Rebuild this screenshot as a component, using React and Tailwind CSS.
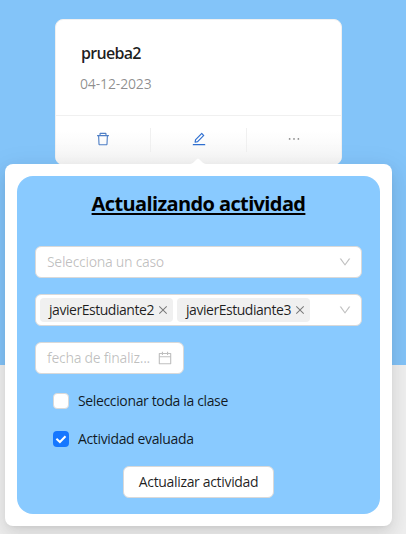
import {
  AiOutlineCalendar,
  AiOutlineClose,
  AiOutlineDelete,
  AiOutlineDown,
  AiOutlineEdit,
  AiOutlineEllipsis,
} from "react-icons/ai";

function ActivityCard() {
  return (
    <section className="mx-auto mt-[19px] mr-[64px] ml-[55px] h-[146px] overflow-hidden rounded-lg border border-[#f0f0f0] bg-white">
      <div className="h-[95px] px-[25px] pt-[21px]">
        <h2 className="text-[16px] leading-6 font-semibold tracking-[-0.7px] text-black/88">prueba2</h2>
        <p className="mt-[8px] -ml-px text-[14px] leading-[22px] tracking-[-0.15px] text-black/45">04-12-2023</p>
      </div>
      <ul className="grid h-[49px] grid-cols-[95px_96px_94px] items-center border-t border-[#f0f0f0] bg-linear-to-b from-white from-30% to-[#f5f5f5]">
        <li className="flex h-6 items-center justify-center border-r border-[#f0f0f0] pb-0.5 text-[#4f7fc6]">
          <AiOutlineDelete size={16} />
        </li>
        <li className="flex h-6 items-center justify-center border-r border-[#f0f0f0] pb-0.5 text-[#2f6fd0]">
          <AiOutlineEdit size={16} />
        </li>
        <li className="flex h-6 items-center justify-center pb-0.5 text-black/45">
          <AiOutlineEllipsis size={16} />
        </li>
      </ul>
    </section>
  );
}

function Tag({ children }) {
  return (
    <span className="flex h-6 w-[133px] items-center justify-between rounded bg-[#f0f0f0] pr-[4px] pl-[9px] text-black/88">
      <span className="tracking-[-0.46px] whitespace-nowrap">{children}</span>
      <AiOutlineClose size={12} className="shrink-0 text-black/50" />
    </span>
  );
}

function Checkbox({ checked, children }) {
  return (
    <label className="flex h-[22px] items-center gap-[9px] text-black/88">
      {checked ? (
        <span className="flex size-4 items-center justify-center rounded bg-[#1677ff]">
          <svg viewBox="0 0 12 12" className="size-3" fill="none" stroke="white" strokeWidth="2">
            <path d="M1.4 5.7 4.9 9 10.5 3.2" />
          </svg>
        </span>
      ) : (
        <span className="size-4 rounded border border-[#d9d9d9] bg-white" />
      )}
      <span className="tracking-[-0.36px] whitespace-nowrap">{children}</span>
    </label>
  );
}

function UpdatePopover() {
  return (
    <div className="absolute top-[164px] left-[5px] h-[362px] w-[387px] rounded-lg bg-white p-3 shadow-[0_6px_16px_0_rgba(0,0,0,0.08),0_3px_6px_-4px_rgba(0,0,0,0.12),0_9px_28px_8px_rgba(0,0,0,0.05)]">
      <svg viewBox="0 0 16 6" className="absolute -top-[6px] left-[185px] h-[6px] w-4" fill="white">
        <path d="M0 6Q2 6 3.4 4.6L7 1Q8 0 9 1L12.6 4.6Q14 6 16 6Z" />
      </svg>
      <form className="flex h-[338px] flex-col rounded-2xl bg-[#89caff] px-[18px] text-[14px] leading-[22px]">
        <h1 className="mt-3 h-[58px] text-center text-[20px] leading-8 font-bold text-black">
          <span className="tracking-[-0.62px] underline decoration-2 underline-offset-2 [text-decoration-skip-ink:none]">
            Actualizando actividad
          </span>
        </h1>
        <div className="flex h-8 items-center justify-between rounded-md border border-[#d9d9d9] bg-white pr-[9px] pl-[11px] text-black/25">
          <span className="tracking-[-0.32px]">Selecciona un caso</span>
          <AiOutlineDown size={14} />
        </div>
        <div className="mt-4 flex h-8 items-center gap-1 rounded-md border border-[#d9d9d9] bg-white pr-[9px] pl-1 text-black/25">
          <Tag>javierEstudiante2</Tag>
          <Tag>javierEstudiante3</Tag>
          <AiOutlineDown size={14} className="ml-auto" />
        </div>
        <div className="mt-4 flex h-8 w-[149px] items-center justify-between rounded-md border border-[#d9d9d9] bg-white pr-[10px] pl-[11px] text-black/25">
          <span className="tracking-[-0.3px]">fecha de finaliz...</span>
          <AiOutlineCalendar size={16} />
        </div>
        <div className="mt-4 flex flex-col gap-4 pl-[18px]">
          <Checkbox>Seleccionar toda la clase</Checkbox>
          <Checkbox checked>Actividad evaluada</Checkbox>
        </div>
        <button
          type="button"
          className="mt-4 h-8 w-[151px] self-center rounded-md border border-[#d9d9d9] bg-white tracking-[-0.33px] whitespace-nowrap text-black/88"
        >
          Actualizar actividad
        </button>
      </form>
    </div>
  );
}

export default function App() {
  return (
    <main className="relative h-[534px] w-[406px] overflow-hidden bg-[#f0f0f0] font-['Open_Sans',sans-serif]">
      <div className="flow-root h-[365px] bg-[#83c4f9]">
        <ActivityCard />
      </div>
      <UpdatePopover />
    </main>
  );
}
